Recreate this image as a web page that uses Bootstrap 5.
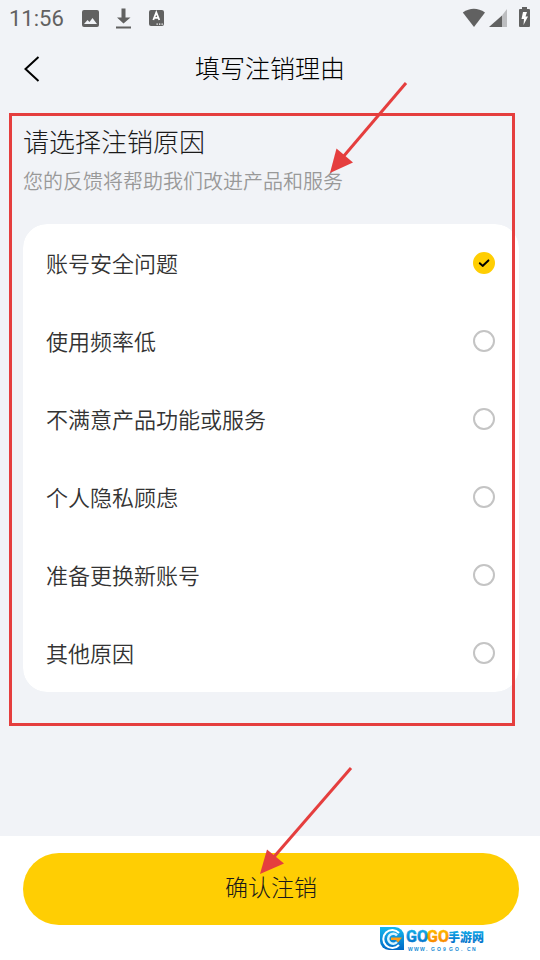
<!DOCTYPE html>
<html lang="zh-CN">
<head>
<meta charset="utf-8">
<meta name="viewport" content="width=device-width, initial-scale=1">
<title>填写注销理由</title>
<link href="https://cdn.jsdelivr.net/npm/bootstrap@5.3.0/dist/css/bootstrap.min.css" rel="stylesheet">
<style>
  body { background: #f1f3f7; color: #1a1a1a; font-family: "Noto Sans CJK SC", sans-serif; font-weight: 350; }
  .status-bar { height: 38px; padding: 0 8px 2px 9px; color: #616161; }
  .clock { font: 400 22px/36px Roboto, sans-serif; padding-top: 2px; }
  .top-bar { height: 62px; padding: 0 23px; color: #000; }
  .top-bar h1 { font-size: 25px; line-height: 36px; font-weight: 300; padding-bottom: 4px; }
  .side-slot { width: 44px; }
  .reasons { padding: 22px 21px 0 23px; }
  .reasons h2 { font-size: 26px; line-height: 38px; font-weight: 300; }
  .hint { font-size: 20px; line-height: 30px; color: #999; margin: 6px 0 28px; }
  .reason-card { border-radius: 24px; --bs-list-group-border-width: 0; }
  .reason-row { height: 78px; padding: 0 24px 1px 23px; font-size: 22px; color: #333; }
  .reason-row .form-check-input { width: 22px; height: 22px; border: 2px solid #c4c4c4; box-shadow: none; }
  .reason-row .form-check-input:checked {
    background-color: #ffce03; border-color: #ffce03; background-size: 22px 22px;
    background-image: url("data:image/svg+xml,%3Csvg xmlns='http://www.w3.org/2000/svg' viewBox='0 0 22 22'%3E%3Cpath d='M6.800 11.200l2.800 2.700 5.800-5.500' fill='none' stroke='%23000' stroke-width='2' stroke-linecap='round' stroke-linejoin='round'/%3E%3C/svg%3E");
  }
  .footer-bar { padding: 17px 21px 35px 23px; }
  .confirm { height: 72px; padding: 0 0 5px; background: #ffce03; font-size: 23px; font-weight: 300; color: #1a1a1a;
    --bs-btn-hover-bg: #f2c300; --bs-btn-active-bg: #e6b900; }
  .frame { inset: 13px 25px -34px 9px; border: 3px solid #e53e3e; }
  .overlay { pointer-events: none; }
  .arrow-top { left: 329px; top: -20px; }
  .arrow-bottom { left: 259px; top: -71px; }
  .site-logo { right: 53px; bottom: 8px; }
</style>
<script src="https://cdn.jsdelivr.net/npm/bootstrap@5.3.0/dist/js/bootstrap.bundle.min.js" defer></script>
</head>
<body>
<div class="d-flex flex-column min-vh-100">
  <div class="status-bar d-flex align-items-center justify-content-between">
    <div class="d-flex align-items-center">
      <span class="clock">11:56</span>
      <svg class="ms-3" width="88" height="24" viewBox="0 0 88 24" fill="#616161" aria-hidden="true">
        <path fill-rule="evenodd" d="M4 4h13a2 2 0 0 1 2 2v13a2 2 0 0 1-2 2H4a2 2 0 0 1-2-2V6a2 2 0 0 1 2-2zm0 14h13l-4.500-6-3 4-2-2z"/>
        <path d="M41.500 2.500h4v9h5L43.500 17.500 37 11.500h4.500zM36 20.500h15v2H36z"/>
        <rect x="69" y="4" width="15" height="16" rx="2"/>
        <path d="M73.300 14l3-7.500 3 7.500M74.500 11.800h3.600" fill="none" stroke="#fff" stroke-width="1.800"/>
        <path d="M76.500 17.500h1.300v1.300h-1.300zM79 17.500h1.300v1.300H79zM81.500 17.500h1.300v1.300h-1.300z" fill="#fff"/>
      </svg>
    </div>
    <svg width="70" height="24" viewBox="0 0 70 24" fill="#616161" aria-hidden="true">
      <path d="M.8 6.500Q11.800-1 23 6.500L12 21z"/>
      <path d="M40 9.500V21H27z"/><path d="M40 9.500L45 3v18h-5z" fill="#bcbdc0"/>
      <path d="M60 1h5v2h2a1 1 0 0 1 1 1v16a1 1 0 0 1-1 1h-9a1 1 0 0 1-1-1V4a1 1 0 0 1 1-1h2z"/>
      <path d="M61 6h4l-1.500 4.500H66L61.500 19l.5-6h-2.500z" fill="#fff"/>
    </svg>
  </div>
  <header class="top-bar d-flex align-items-center justify-content-between">
    <div class="side-slot">
      <button type="button" class="btn p-0 border-0 d-block" aria-label="返回">
        <svg class="d-block" width="18" height="28" viewBox="0 0 18 28" fill="none" stroke="#000" stroke-width="2"><path d="M15.500 2L2.500 14l13 12"/></svg>
      </button>
    </div>
    <h1 class="mb-0">填写注销理由</h1>
    <div class="side-slot"></div>
  </header>
  <main class="reasons position-relative">
    <h2 class="mb-0">请选择注销原因</h2>
    <p class="hint">您的反馈将帮助我们改进产品和服务</p>
    <div class="list-group reason-card overflow-hidden">
      <label class="list-group-item reason-row d-flex align-items-center justify-content-between">账号安全问题<input class="form-check-input m-0" type="radio" name="reason" checked></label>
      <label class="list-group-item reason-row d-flex align-items-center justify-content-between">使用频率低<input class="form-check-input m-0" type="radio" name="reason"></label>
      <label class="list-group-item reason-row d-flex align-items-center justify-content-between">不满意产品功能或服务<input class="form-check-input m-0" type="radio" name="reason"></label>
      <label class="list-group-item reason-row d-flex align-items-center justify-content-between">个人隐私顾虑<input class="form-check-input m-0" type="radio" name="reason"></label>
      <label class="list-group-item reason-row d-flex align-items-center justify-content-between">准备更换新账号<input class="form-check-input m-0" type="radio" name="reason"></label>
      <label class="list-group-item reason-row d-flex align-items-center justify-content-between">其他原因<input class="form-check-input m-0" type="radio" name="reason"></label>
    </div>
    <div class="frame overlay position-absolute"></div>
    <svg class="arrow-top overlay position-absolute" width="80" height="96" viewBox="0 0 80 96" fill="#e53e3e" aria-hidden="true">
      <path d="M77 3L14 77" stroke="#e53e3e" stroke-width="3"/><path d="M1 93L7.500 68.500 24 82.500z"/>
    </svg>
  </main>
  <footer class="footer-bar bg-white position-relative mt-auto">
    <button type="button" class="btn confirm w-100 rounded-pill border-0">确认注销</button>
    <svg class="arrow-bottom overlay position-absolute" width="96" height="112" viewBox="0 0 96 112" fill="#e53e3e" aria-hidden="true">
      <path d="M92 3L14 93" stroke="#e53e3e" stroke-width="3"/><path d="M1 109L8 84.500 25 98.500z"/>
    </svg>
    <svg class="site-logo overlay position-absolute" width="107" height="26" viewBox="0 0 107 26" role="img" aria-label="GOGO手游网">
      <defs>
        <linearGradient id="blue" x1="0" y1="0" x2="0" y2="1"><stop offset="0" stop-color="#17b9ee"/><stop offset="1" stop-color="#0067c5"/></linearGradient>
        <linearGradient id="gold" x1="0" y1="0" x2="0" y2="1"><stop offset="0" stop-color="#ffc400"/><stop offset="1" stop-color="#f77a00"/></linearGradient>
      </defs>
      <path d="M0 1h15a9 9 0 0 1 9 9v14H9a9 9 0 0 1-9-9z" fill="url(#blue)"/>
      <path d="M19 7a9 9 0 1 0 0 12" fill="none" stroke="#fff" stroke-width="2"/>
      <path d="M17 9.500a5 5 0 1 0 0 6.500" fill="none" stroke="#d8f4ff" stroke-width="2.500"/>
      <path d="M11 11.500h11l-4 5-2-2.500h-5z" fill="#ff9d16"/>
      <g font-weight="700">
        <g font-size="16" font-family="Roboto, sans-serif" stroke-width="0.5">
          <text x="26" y="16" fill="url(#blue)" stroke="url(#blue)">GO</text>
          <text x="47" y="16" fill="url(#gold)" stroke="url(#gold)">GO</text>
        </g>
        <text x="68" y="16" font-size="12" font-weight="900" fill="url(#blue)" font-family="Noto Sans CJK SC, sans-serif">手游网</text>
        <text y="25" font-size="5" fill="#168bd5" font-family="Liberation Sans, sans-serif" x="28 34 40 46 51 57 63 69 75 81 87 92 98">WWW.GO9GO.CN</text>
      </g>
    </svg>
  </footer>
</div>
</body>
</html>
